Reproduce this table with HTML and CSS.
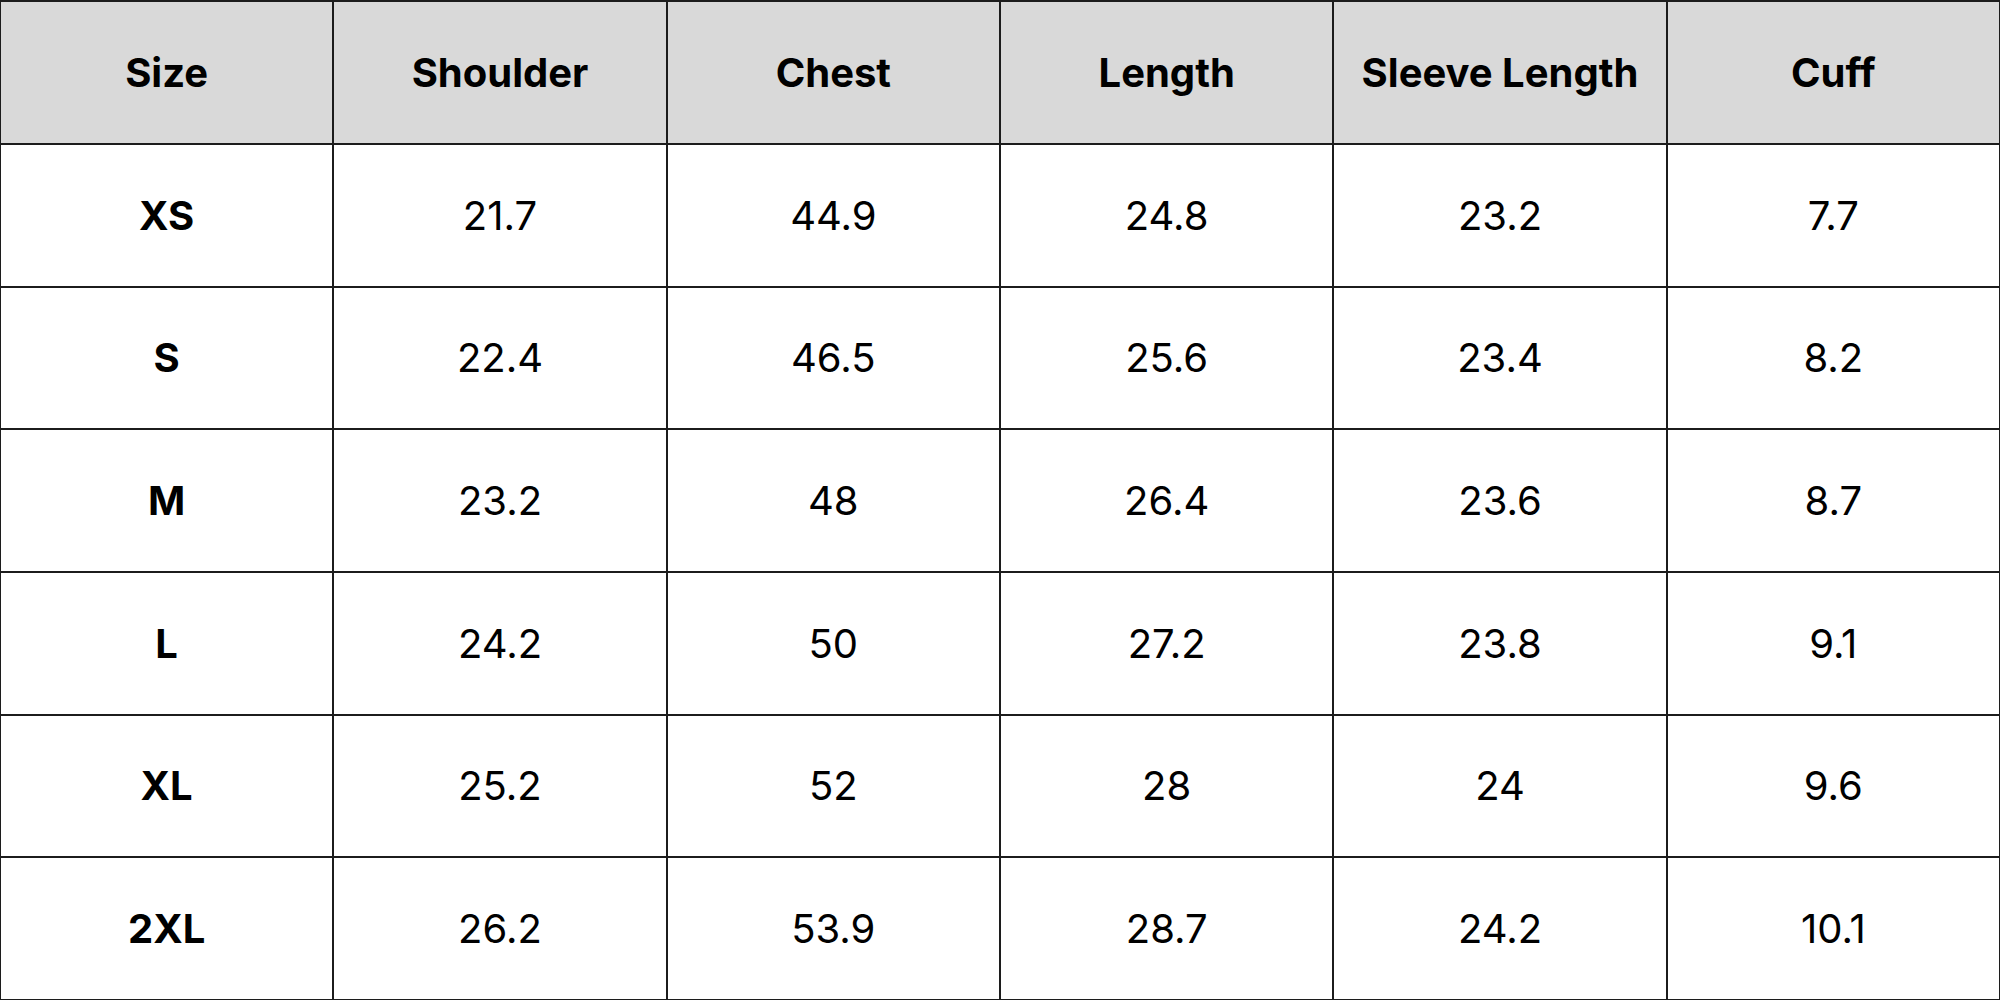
FILE: index.html
```html
<!DOCTYPE html>
<html>
<head>
<meta charset="utf-8">
<link rel="stylesheet" href="styles.css">
</head>
<body>
<div class="chart">
  <div class="cell head">Size</div>
  <div class="cell head">Shoulder</div>
  <div class="cell head">Chest</div>
  <div class="cell head">Length</div>
  <div class="cell head">Sleeve Length</div>
  <div class="cell head">Cuff</div>

  <div class="cell size">XS</div>
  <div class="cell">21.7</div>
  <div class="cell">44.9</div>
  <div class="cell">24.8</div>
  <div class="cell">23.2</div>
  <div class="cell">7.7</div>

  <div class="cell size">S</div>
  <div class="cell">22.4</div>
  <div class="cell">46.5</div>
  <div class="cell">25.6</div>
  <div class="cell">23.4</div>
  <div class="cell">8.2</div>

  <div class="cell size">M</div>
  <div class="cell">23.2</div>
  <div class="cell">48</div>
  <div class="cell">26.4</div>
  <div class="cell">23.6</div>
  <div class="cell">8.7</div>

  <div class="cell size">L</div>
  <div class="cell">24.2</div>
  <div class="cell">50</div>
  <div class="cell">27.2</div>
  <div class="cell">23.8</div>
  <div class="cell">9.1</div>

  <div class="cell size">XL</div>
  <div class="cell">25.2</div>
  <div class="cell">52</div>
  <div class="cell">28</div>
  <div class="cell">24</div>
  <div class="cell">9.6</div>

  <div class="cell size">2XL</div>
  <div class="cell">26.2</div>
  <div class="cell">53.9</div>
  <div class="cell">28.7</div>
  <div class="cell">24.2</div>
  <div class="cell">10.1</div>
</div>
</body>
</html>
```

FILE: styles.css
```css
html, body {
  margin: 0;
  padding: 0;
  background: #ffffff;
}

.chart {
  box-sizing: border-box;
  width: 2000px;
  height: 1000px;
  display: grid;
  grid-template-columns: repeat(6, 1fr);
  grid-template-rows: 141px repeat(6, 1fr);
  gap: 2px;
  padding: 2px 1px 1px 1px;
  background: #1c1c1c;
  font-family: Inter, "Noto Sans", sans-serif;
  color: #000000;
}

.cell {
  background: #ffffff;
  display: flex;
  align-items: center;
  justify-content: center;
  font-size: 40px;
  font-weight: 400;
}

.head {
  background: #d9d9d9;
  font-weight: 700;
}

.size {
  font-weight: 700;
}
```
